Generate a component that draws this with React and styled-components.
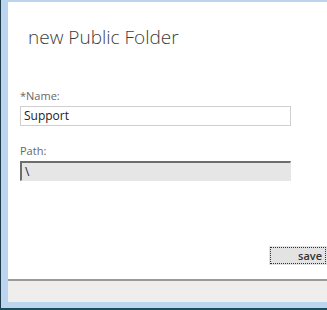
import styled, { createGlobalStyle } from "styled-components";

const Global = createGlobalStyle`
  html, body {
    margin: 0;
    padding: 0;
    background: #1b4e5a;
  }
  body {
    font-family: "Open Sans", "Noto Sans", sans-serif;
  }
`;

const Frame = styled.div`
  width: 327px;
  height: 308px;
  box-sizing: border-box;
  border-left: 1px solid #1e3a4a;
  background: #bcd5ee;
  padding: 2px 0 6px 7px;
  display: flex;
`;

const Dialog = styled.div`
  flex: 1;
  background: #fff;
  display: flex;
  flex-direction: column;
`;

const Body = styled.div`
  flex: 1;
  padding: 0 0 0 12px;
  display: flex;
  flex-direction: column;
`;

const Title = styled.h1`
  margin: 22px 0 0 8px;
  font-weight: 300;
  font-size: 19px;
  line-height: 26px;
  color: #3c3c3c;
`;

const Form = styled.div`
  margin-top: 39px;
  width: 271px;
  display: flex;
  flex-direction: column;
`;

const Label = styled.label`
  font-size: 11px;
  line-height: 14px;
  color: #666;
  margin-bottom: 3px;
`;

const Input = styled.div`
  height: 20px;
  box-sizing: border-box;
  border: 1px solid ${({ $disabled }) => ($disabled ? "#e6e6e6" : "#cfcfcf")};
  border-top-color: ${({ $disabled }) => ($disabled ? "#6d6d6d" : "#cfcfcf")};
  border-left-color: ${({ $disabled }) => ($disabled ? "#6d6d6d" : "#cfcfcf")};
  border-top-width: ${({ $disabled }) => ($disabled ? "2px" : "1px")};
  border-left-width: ${({ $disabled }) => ($disabled ? "2px" : "1px")};
  background: ${({ $disabled }) => ($disabled ? "#e6e6e6" : "#fff")};
  font-size: 12px;
  line-height: 18px;
  padding: 0 3px;
  color: #222;
  margin-bottom: ${({ $gap }) => $gap || 0}px;
`;

const Actions = styled.div`
  flex: 1;
  display: flex;
  justify-content: flex-end;
  align-items: flex-end;
  padding-bottom: 14px;
`;

const SaveButton = styled.button`
  width: 58px;
  height: 19px;
  box-sizing: border-box;
  background: #e3e3e3;
  border: none;
  outline: 1px dotted #333;
  outline-offset: -2px;
  font-family: "Open Sans", "Noto Sans", sans-serif;
  font-size: 11px;
  font-weight: 600;
  color: #333;
  text-align: right;
  padding: 0 5px 1px 0;
`;

const Footer = styled.div`
  height: 21px;
  border-top: 2px solid #9a9a9a;
  background: #f0eded;
`;

export default function App() {
  return (
    <>
      <Global />
      <Frame>
        <Dialog>
          <Body>
            <Title>new Public Folder</Title>
            <Form>
              <Label>*Name:</Label>
              <Input $gap={18}>Support</Input>
              <Label>Path:</Label>
              <Input $disabled>\</Input>
            </Form>
            <Actions>
              <SaveButton>save</SaveButton>
            </Actions>
          </Body>
          <Footer />
        </Dialog>
      </Frame>
    </>
  );
}
